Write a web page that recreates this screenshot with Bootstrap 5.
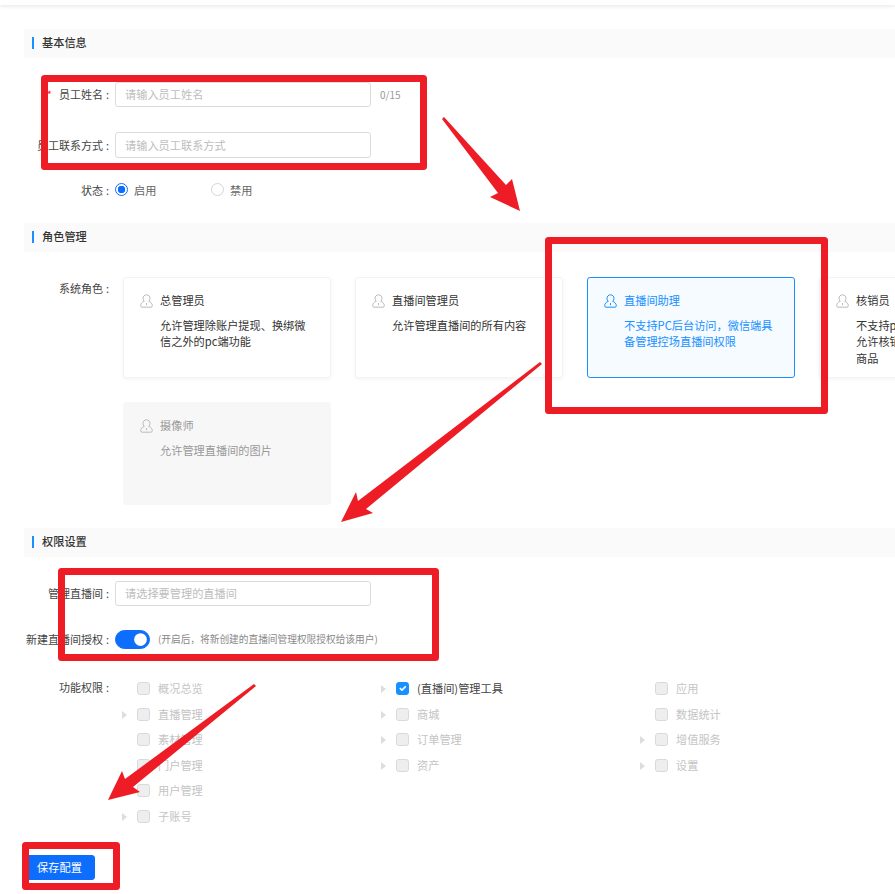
<!DOCTYPE html>
<html lang="zh-CN">
<head>
<meta charset="utf-8">
<title>员工配置</title>
<link href="https://cdn.jsdelivr.net/npm/bootstrap@5.3.0/dist/css/bootstrap.min.css" rel="stylesheet">
<style>
html,body{height:894px;overflow:hidden;background:#fff}
body{font-family:"Noto Sans CJK SC","Liberation Sans",sans-serif;font-size:11.2px;color:#333;position:relative}
.top-strip{height:5px;background:#fff;box-shadow:0 1px 4px rgba(40,50,80,.13)}
.page-body{padding:24px 0 0 24px}
.sec-head{height:29px;background:#fafafa;font-weight:500;font-size:11.2px;padding:0 0 1px 8px;color:#333;margin:0}
.sec-head::before{content:"";width:2px;height:12px;background:#1890ff;margin-right:8px}
.sec-role{margin-top:20px}
.sec-perm{margin-top:23px}
.fld{display:flex;align-items:center}
.fld-label{width:92px;flex:none;text-align:right;margin-right:6px;white-space:nowrap;margin-left:-7px;color:#444;font-size:11px}
.fld-label i{font-style:normal;margin-left:3px}
.req{color:#f5222d;margin-right:7px}
.text-in{width:256px;height:25px;font-size:11.2px;border:1px solid #dcdcdc;border-radius:3px;padding:0 9px 1px;color:#333;box-shadow:none}
.text-in::placeholder{color:#bdbdbd}
.counter{font-size:10px;color:#999;margin-left:9px}
.row-name{margin-top:24px}
.row-contact{margin-top:25px;height:26px}
.row-contact .text-in{height:26px}
.row-state{margin-top:19px;height:26px}
.radio-box{width:13px;height:13px;margin:0;border:1px solid #d5d5d5;flex:none}
.radio-box:checked{background-color:#fff;border-color:#0d6efd;background-image:radial-gradient(circle,#0d6efd 0 3.5px,#fff 4px)}
.opt{display:flex;align-items:center;gap:6px;color:#666}
.opt-a{width:96px}
.role-wrap{margin-top:25px;overflow:hidden;align-items:flex-start}
.role-wrap .fld-label{margin-top:3px;margin-right:14px;line-height:16px}
.role-grid{display:grid;grid-template-columns:repeat(4,208px);grid-template-rows:101px 103px;gap:24px;flex:none}
.role-card{border:1px solid #f3f3f3;border-radius:3px;box-shadow:0 1px 4px rgba(0,0,0,.05);padding:14px 16px;display:flex;gap:7px;line-height:16.5px;color:#333}
.role-ico{width:13px;height:14px;flex:none;margin-top:2px;color:#bbb}
.role-t{margin-bottom:8px}
.role-card.picked{border-color:#1890ff;background:#f6fbff;color:#1890ff;box-shadow:none}
.role-card.picked .role-ico{color:#1890ff}
.role-card.off{background:#f7f7f7;border-color:#f7f7f7;color:#999;box-shadow:none}
.row-live{margin-top:24px}
.row-auth{margin-top:24px;height:19px}
.auth-sw{padding:0;margin:0;min-height:0;display:flex;align-items:center}
.auth-sw .form-check-input{width:35px;height:19px;margin:0;background-color:#0d6efd;border-color:#0d6efd}
.auth-note{font-size:9.7px;color:#888;margin-left:8px}
.perm-wrap{margin-top:32px;align-items:flex-start}
.perm-wrap .fld-label{margin-top:-2px;line-height:16px}
.perm-cols{display:flex}
.perm-col{width:259px}
.perm-row{height:25.6px;display:flex;align-items:flex-start;padding-left:7px;color:#c4c4c4}
.perm-arrow{width:15px;flex:none;height:16px;display:flex;align-items:center}
.perm-arrow::before{content:"";border-left:5px solid #ddd;border-top:4px solid transparent;border-bottom:4px solid transparent}
.perm-arrow.none::before{display:none}
.perm-box{width:13px;height:13px;margin:1px 8px 0 0;flex:none;border:1px solid #d9d9d9;border-radius:2px;background-color:#eee;opacity:1!important}
.perm-box:checked{background-color:#1890ff;border-color:#1890ff}
.perm-txt{line-height:15px}
.perm-row.on{color:#444}
.save-btn{margin-top:20px;width:71px;height:25px;padding:0;font-size:11.2px;border-radius:3px;background:#0d6efd;display:block}
.marks{position:absolute;left:0;top:0;pointer-events:none}
</style>
</head>
<body>
<svg width="0" height="0" class="d-none"><defs><symbol id="ico-role" viewBox="0 0 13 14"><path fill="none" stroke="currentColor" d="M6.500.8C4.500.8 3 2.300 3 4.300c0 1.400.5 2.400 1.300 3.100C2.100 8.100.7 9.700.7 11.800c0 .8.500 1.400 1.300 1.400h9c.8 0 1.300-.6 1.300-1.400 0-2.100-1.400-3.700-3.600-4.400.8-.7 1.300-1.700 1.300-3.100 0-2-1.500-3.500-3.500-3.500Z"/><path fill="none" stroke="currentColor" d="M6.500 9v2.200"/></symbol></defs></svg>
<div class="top-strip"></div>
<main class="page-body">
  <h2 class="sec-head d-flex align-items-center">基本信息</h2>
  <div class="fld row-name"><label class="fld-label"><span class="req">*</span>员工姓名<i>:</i></label><input class="form-control text-in" placeholder="请输入员工姓名"><span class="counter">0/15</span></div>
  <div class="fld row-contact"><label class="fld-label">员工联系方式<i>:</i></label><input class="form-control text-in" placeholder="请输入员工联系方式"></div>
  <div class="fld row-state"><label class="fld-label">状态<i>:</i></label>
    <label class="opt opt-a"><input class="form-check-input radio-box" type="radio" name="st" checked>启用</label>
    <label class="opt"><input class="form-check-input radio-box" type="radio" name="st">禁用</label>
  </div>

  <h2 class="sec-head sec-role d-flex align-items-center">角色管理</h2>
  <div class="fld role-wrap"><label class="fld-label">系统角色<i>:</i></label>
    <div class="role-grid">
      <div class="role-card"><svg class="role-ico"><use href="#ico-role"/></svg><div><div class="role-t">总管理员</div><div>允许管理除账户提现、换绑微信之外的pc端功能</div></div></div>
      <div class="role-card"><svg class="role-ico"><use href="#ico-role"/></svg><div><div class="role-t">直播间管理员</div><div>允许管理直播间的所有内容</div></div></div>
      <div class="role-card picked"><svg class="role-ico"><use href="#ico-role"/></svg><div><div class="role-t">直播间助理</div><div>不支持PC后台访问，微信端具备管理控场直播间权限</div></div></div>
      <div class="role-card"><svg class="role-ico"><use href="#ico-role"/></svg><div><div class="role-t">核销员</div><div>不支持pc后台访问，微信端<br>允许核销直播间订单中的<br>商品</div></div></div>
      <div class="role-card off"><svg class="role-ico"><use href="#ico-role"/></svg><div><div class="role-t">摄像师</div><div>允许管理直播间的图片</div></div></div>
    </div>
  </div>

  <h2 class="sec-head sec-perm d-flex align-items-center">权限设置</h2>
  <div class="fld row-live"><label class="fld-label">管理直播间<i>:</i></label><input class="form-control text-in" placeholder="请选择要管理的直播间"></div>
  <div class="fld row-auth"><label class="fld-label">新建直播间授权<i>:</i></label><div class="form-check form-switch auth-sw"><input class="form-check-input" type="checkbox" role="switch" checked></div><span class="auth-note">(开启后，将新创建的直播间管理权限授权给该用户)</span></div>
  <div class="fld perm-wrap"><label class="fld-label">功能权限<i>:</i></label>
    <div class="perm-cols">
      <div class="perm-col">
        <div class="perm-row"><span class="perm-arrow none"></span><input class="form-check-input perm-box" type="checkbox" disabled><span class="perm-txt">概况总览</span></div>
        <div class="perm-row"><span class="perm-arrow"></span><input class="form-check-input perm-box" type="checkbox" disabled><span class="perm-txt">直播管理</span></div>
        <div class="perm-row"><span class="perm-arrow none"></span><input class="form-check-input perm-box" type="checkbox" disabled><span class="perm-txt">素材管理</span></div>
        <div class="perm-row"><span class="perm-arrow none"></span><input class="form-check-input perm-box" type="checkbox" disabled><span class="perm-txt">门户管理</span></div>
        <div class="perm-row"><span class="perm-arrow none"></span><input class="form-check-input perm-box" type="checkbox" disabled><span class="perm-txt">用户管理</span></div>
        <div class="perm-row"><span class="perm-arrow"></span><input class="form-check-input perm-box" type="checkbox" disabled><span class="perm-txt">子账号</span></div>
      </div>
      <div class="perm-col">
        <div class="perm-row on"><span class="perm-arrow"></span><input class="form-check-input perm-box" type="checkbox" checked disabled><span class="perm-txt">(直播间)管理工具</span></div>
        <div class="perm-row"><span class="perm-arrow"></span><input class="form-check-input perm-box" type="checkbox" disabled><span class="perm-txt">商城</span></div>
        <div class="perm-row"><span class="perm-arrow"></span><input class="form-check-input perm-box" type="checkbox" disabled><span class="perm-txt">订单管理</span></div>
        <div class="perm-row"><span class="perm-arrow"></span><input class="form-check-input perm-box" type="checkbox" disabled><span class="perm-txt">资产</span></div>
      </div>
      <div class="perm-col">
        <div class="perm-row"><span class="perm-arrow none"></span><input class="form-check-input perm-box" type="checkbox" disabled><span class="perm-txt">应用</span></div>
        <div class="perm-row"><span class="perm-arrow none"></span><input class="form-check-input perm-box" type="checkbox" disabled><span class="perm-txt">数据统计</span></div>
        <div class="perm-row"><span class="perm-arrow"></span><input class="form-check-input perm-box" type="checkbox" disabled><span class="perm-txt">增值服务</span></div>
        <div class="perm-row"><span class="perm-arrow"></span><input class="form-check-input perm-box" type="checkbox" disabled><span class="perm-txt">设置</span></div>
      </div>
    </div>
  </div>
  <button class="btn btn-primary save-btn" type="button">保存配置</button>
</main>
<svg class="marks" width="895" height="894" viewBox="0 0 895 894" fill="none">
  <g stroke="#ee1c25" stroke-width="7" stroke-linejoin="round">
    <rect x="44.500" y="78.500" width="379" height="88"/>
    <rect x="548.500" y="240.500" width="276" height="170"/>
    <rect x="61.500" y="571.500" width="374" height="86"/>
    <rect x="25.500" y="845.500" width="91" height="41"/>
  </g>
  <g fill="#ee1c25">
    <polygon points="442,119 444,117 506,185 512,179 520,211 490,197 498,193"/>
    <polygon points="540,362 542,364 366,509 373,513 341,522 356,492 358,501"/>
    <polygon points="254,684 256,686 133,787 140,792 108,800 122,771 125,779"/>
  </g>
</svg>
</body>
</html>
